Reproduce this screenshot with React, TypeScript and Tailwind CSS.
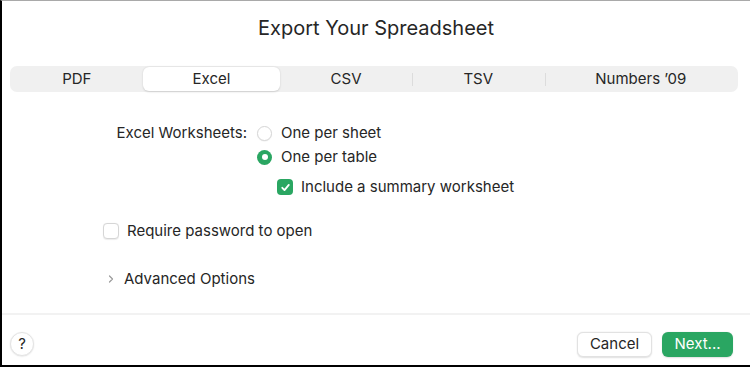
const font = { fontFamily: 'Inter, "Noto Sans", sans-serif' };

function Radio({ checked }: { checked?: boolean }) {
  return checked ? (
    <span className="flex h-[15px] w-[15px] items-center justify-center rounded-full bg-[#2aa662]">
      <span className="h-[6px] w-[6px] rounded-full bg-white" />
    </span>
  ) : (
    <span className="h-[15px] w-[15px] rounded-full border border-[#d6d6d6] bg-white shadow-[0_0.5px_1px_rgba(0,0,0,0.08)]" />
  );
}

function Check({ checked }: { checked?: boolean }) {
  return checked ? (
    <span className="flex h-[16px] w-[16px] items-center justify-center rounded-[4px] bg-[#2aa662]">
      <svg width="11" height="11" viewBox="0 0 12 12" fill="none">
        <path d="M2.5 6.3l2.4 2.5L9.6 3.2" stroke="white" strokeWidth="2" strokeLinecap="round" strokeLinejoin="round" />
      </svg>
    </span>
  ) : (
    <span className="h-[16px] w-[16px] rounded-[4px] border border-[#d6d6d6] bg-white shadow-[0_0.5px_1px_rgba(0,0,0,0.08)]" />
  );
}

const tabs = [
  { label: 'PDF', w: 'w-[132px]' },
  { label: 'Excel', w: 'w-[138px]', active: true },
  { label: 'CSV', w: 'w-[132px]' },
  { label: 'TSV', w: 'w-[133px]' },
  { label: "Numbers \u201909", w: 'w-[193px]' },
];

export default function App() {
  return (
    <div
      style={font}
      className="flex h-[367px] w-[750px] flex-col border-t border-b-2 border-l-2 border-t-[#a9a9a9] border-b-black border-l-black bg-white text-[#262626]"
    >
      <h1 className="mt-[13px] h-[28px] text-center text-[20px] leading-[28px] font-normal">Export Your Spreadsheet</h1>

      <div className="mt-[24px] ml-[8px] flex h-[26px] w-[728px] items-center rounded-[7px] bg-[#f0f0f0] p-[1px]">
        {tabs.map((t, i) => (
          <div key={t.label} className={`relative flex h-full items-center justify-center ${t.w}`}>
            {t.active && (
              <div className="absolute inset-0 rounded-[6px] bg-white shadow-[0_0.5px_2px_rgba(0,0,0,0.15)]" />
            )}
            {i >= 3 && <span className="absolute top-[6px] left-0 h-[13px] w-px bg-[#dcdcdc]" />}
            <span className="relative text-[15px]">{t.label}</span>
          </div>
        ))}
      </div>

      <div className="flex flex-1 flex-col text-[15px]">
        <div className="mt-[31px] flex h-[20px] items-center">
          <div className="w-[245px] text-right">Excel Worksheets:</div>
          <div className="ml-[10px] flex items-center gap-[9px]">
            <Radio />
            <span>One per sheet</span>
          </div>
        </div>
        <div className="mt-[4px] flex h-[20px] items-center gap-[9px] pl-[255px]">
          <Radio checked />
          <span>One per table</span>
        </div>
        <div className="mt-[10px] flex h-[20px] items-center gap-[8px] pl-[275px]">
          <Check checked />
          <span>Include a summary worksheet</span>
        </div>
        <div className="mt-[24px] flex h-[20px] items-center gap-[8px] pl-[101px]">
          <Check />
          <span>Require password to open</span>
        </div>
        <div className="mt-[28px] flex h-[20px] items-center gap-[9px] pl-[105px]">
          <svg width="8" height="10" viewBox="0 0 8 10" fill="none">
            <path d="M2.5 2l3 3-3 3" stroke="#9a9a9a" strokeWidth="1.2" strokeLinecap="round" strokeLinejoin="round" />
          </svg>
          <span>Advanced Options</span>
        </div>
      </div>

      <div className="flex h-[52px] items-center justify-between border-t-2 border-[#f2f2f2] pt-[8px] pr-[17px] pl-[8px]">
        <div className="flex h-[24px] w-[24px] items-center justify-center rounded-full border border-[#e4e4e4] bg-white text-[15px] shadow-[0_0.5px_1.5px_rgba(0,0,0,0.12)]">
          ?
        </div>
        <div className="flex items-center gap-[10px]">
          <button className="h-[25px] w-[75px] rounded-[6px] border border-[#e2e2e2] bg-white text-[15px] shadow-[0_0.5px_1.5px_rgba(0,0,0,0.12)]">
            Cancel
          </button>
          <button className="h-[25px] w-[71px] rounded-[6px] bg-[#2aa662] text-[15px] text-white shadow-[0_0.5px_1.5px_rgba(0,0,0,0.12)]">
            Next...
          </button>
        </div>
      </div>
    </div>
  );
}
